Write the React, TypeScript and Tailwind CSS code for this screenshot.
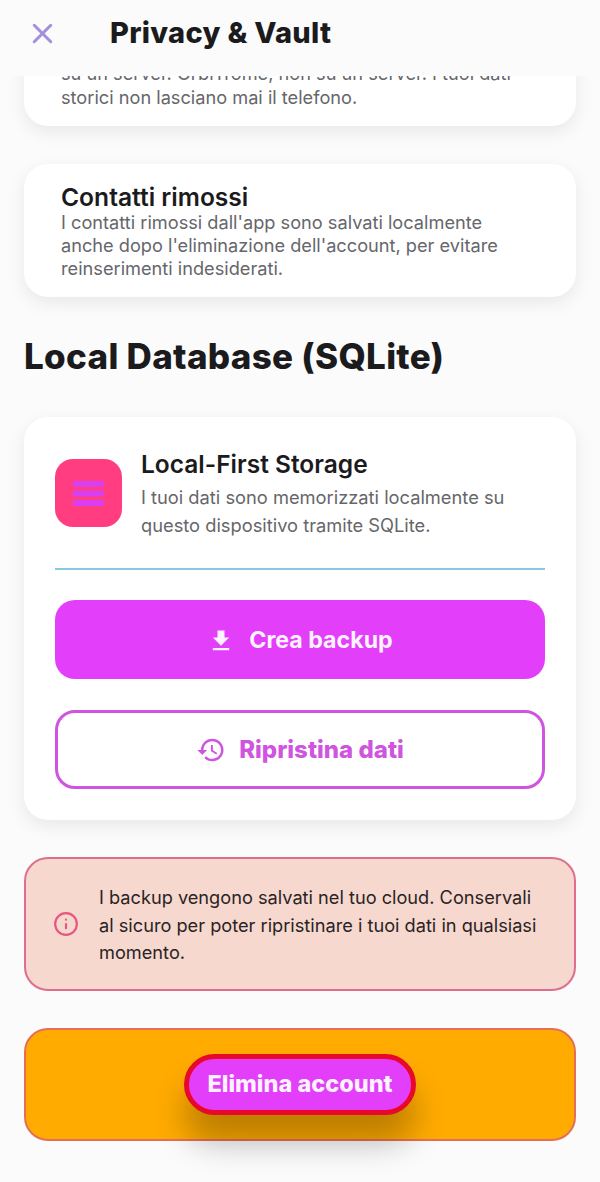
import { X, Info } from "lucide-react";
import { MdFileDownload, MdHistory } from "react-icons/md";

function StorageIcon() {
  return (
    <svg width="31" height="25" viewBox="0 0 31 25" fill="#d93ff0">
      <rect x="0" y="0" width="31" height="6" rx="2" />
      <rect x="0" y="9.5" width="31" height="6" rx="2" />
      <rect x="0" y="19" width="31" height="6" rx="2" />
    </svg>
  );
}

export default function App() {
  return (
    <div className="flex h-[1182px] w-[600px] flex-col overflow-hidden bg-[#fbfbfc] font-['Inter',sans-serif] text-[#1b1b1d]">
      <header className="flex h-[76px] shrink-0 items-center pb-[10px] pl-[26px]">
        <X size={33} strokeWidth={2.2} className="text-[#a48fdc]" />
        <h1 className="ml-[51px] text-[29px] font-extrabold tracking-[0.3px]">Privacy &amp; Vault</h1>
      </header>

      <main className="flex-1 overflow-hidden px-6">
        <section className="-mt-[14px] h-[64px] rounded-b-[24px] bg-white px-[37px] text-[18.2px] leading-[23.5px] text-[#66666b] shadow-[0_6px_18px_rgba(0,0,0,0.08)]">
          <p className="whitespace-nowrap">su un server. OrbiTrome, non su un server. I tuoi dati</p>
          <p className="whitespace-nowrap">storici non lasciano mai il telefono.</p>
        </section>

        <section className="mt-[38px] h-[133px] rounded-[24px] bg-white pr-[60px] pl-[37px] pt-[19px] shadow-[0_6px_18px_rgba(0,0,0,0.08)]">
          <h2 className="text-[24.6px] leading-[28px] font-semibold">Contatti rimossi</h2>
          <p className="text-[18.2px] leading-[23px] text-[#66666b]">
            I contatti rimossi dall'app sono salvati localmente anche dopo l'eliminazione dell'account, per evitare
            reinserimenti indesiderati.
          </p>
        </section>

        <h2 className="mt-[37px] text-[35px] leading-[44px] font-extrabold tracking-[0.3px]">Local Database (SQLite)</h2>

        <section className="mt-[39px] h-[403px] rounded-[24px] bg-white px-[31px] pt-[31px] shadow-[0_6px_18px_rgba(0,0,0,0.08)]">
          <div className="flex">
            <div className="mt-[11px] flex h-[68px] w-[67px] shrink-0 items-center justify-center rounded-[18px] bg-[#ff3d80]">
              <StorageIcon />
            </div>
            <div className="ml-[19px]">
              <h3 className="text-[24.5px] leading-[32px] font-semibold">Local-First Storage</h3>
              <p className="mt-[3px] text-[18.3px] leading-[28px] text-[#66666b]">
                I tuoi dati sono memorizzati localmente su questo dispositivo tramite SQLite.
              </p>
            </div>
          </div>

          <div className="mt-[29px] h-0.5 bg-[#85cbe2]" />

          <button className="mt-[30px] flex h-[79px] w-full items-center justify-center gap-[14px] rounded-[20px] bg-[#e33ffb] pt-[2px] text-[23.2px] font-bold text-[#fdf2ff]">
            <MdFileDownload size={28} />
            Crea backup
          </button>

          <button className="mt-[31px] flex h-[79px] w-full items-center justify-center gap-[13px] rounded-[20px] border-[3px] border-[#cf55e0] bg-white text-[24px] font-extrabold text-[#cf55e0]">
            <MdHistory size={30} />
            Ripristina dati
          </button>
        </section>

        <section className="mt-[37px] flex h-[134px] items-center rounded-[24px] border-2 border-[#df6d8e] bg-[#f6d8ce] pr-4 pl-[27px]">
          <Info size={26} strokeWidth={2} className="shrink-0 text-[#e8557f]" />
          <p className="ml-[20px] w-[440px] pt-[3px] text-[18.2px] leading-[27.5px] text-[#2a2325]">
            I backup vengono salvati nel tuo cloud. Conservali al sicuro per poter ripristinare i tuoi dati in qualsiasi
            momento.
          </p>
        </section>

        <section className="mt-[37px] flex h-[113px] items-start justify-center rounded-[24px] border-2 border-[#e56f55] bg-[#ffab00] pt-[24px]">
          <button className="h-[61px] w-[232px] rounded-full border-[5px] border-[#e8092a] bg-[#e33ffb] pb-[2px] text-[23.5px] font-extrabold text-[#fdf2ff] shadow-[0_28px_32px_rgba(0,0,0,0.26)]">
            Elimina account
          </button>
        </section>
      </main>
    </div>
  );
}
